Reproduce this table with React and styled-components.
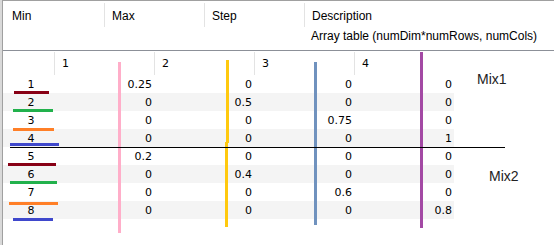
import React from "react";
import styled, { createGlobalStyle } from "styled-components";

const ROWS = [
  { label: "1", values: ["0.25", "0", "0", "0"], swatch: { color: "#880015", left: 11, width: 35, top: 16 } },
  { label: "2", values: ["0", "0.5", "0", "0"], swatch: { color: "#22b14c", left: 10, width: 40, top: 16 } },
  { label: "3", values: ["0", "0", "0.75", "0"], swatch: { color: "#ff7f27", left: 10, width: 41, top: 17 } },
  { label: "4", values: ["0", "0", "0", "1"], swatch: { color: "#3f48cc", left: 7, width: 49, top: 14 } },
  { label: "5", values: ["0.2", "0", "0", "0"], swatch: { color: "#880015", left: 5, width: 48, top: 16 } },
  { label: "6", values: ["0", "0.4", "0", "0"], swatch: { color: "#22b14c", left: 7, width: 47, top: 16 } },
  { label: "7", values: ["0", "0", "0.6", "0"], swatch: { color: "#ff7f27", left: 6, width: 49, top: 19 } },
  { label: "8", values: ["0", "0", "0", "0.8"], swatch: { color: "#3f48cc", left: 10, width: 40, top: 17 } },
];

// hand-drawn markers laid over the sheet
const MARKERS = [
  { color: "#ffaec9", x: 115, y: 11, h: 171 },
  { color: "#ffc90e", x: 223, y: 9, h: 83 },
  { color: "#ffc90e", x: 222, y: 91, h: 85 },
  { color: "#7092be", x: 311, y: 11, h: 163 },
  { color: "#a349a4", x: 417, y: 1, h: 176 },
];

const GlobalStyle = createGlobalStyle`
  html, body {
    margin: 0;
    padding: 0;
    background: #fff;
  }
  body {
    font-family: "Liberation Sans", Arial, sans-serif;
    font-size: 12px;
    color: #000;
  }
`;

function App() {
  return (
    <>
      <GlobalStyle />
      <Frame>
        <Panel>
          <Header>
            <HeadCell>
              <Title $first>Min</Title>
            </HeadCell>
            <HeadCell>
              <Title>Max</Title>
            </HeadCell>
            <HeadCell>
              <Title>Step</Title>
            </HeadCell>
            <HeadCell>
              <Title>Description</Title>
              <Note>Array table (numDim*numRows, numCols)</Note>
            </HeadCell>
          </Header>

          <Body>
            <Sheet>
              <SheetRow $head>
                <Corner />
                {["1", "2", "3", "4"].map((c) => (
                  <ColHead key={c}>{c}</ColHead>
                ))}
              </SheetRow>
              {ROWS.map((row, i) => (
                <SheetRow key={row.label} $striped={i % 2 === 1}>
                  <RowHead>
                    {row.label}
                    <Swatch
                      $color={row.swatch.color}
                      $left={row.swatch.left}
                      $width={row.swatch.width}
                      $top={row.swatch.top}
                    />
                  </RowHead>
                  {row.values.map((v, j) => (
                    <Cell key={j}>{v}</Cell>
                  ))}
                </SheetRow>
              ))}
            </Sheet>

            <Side>
              <Tag $indent={23} $gap={20}>Mix1</Tag>
              <Tag $indent={35} $gap={81}>Mix2</Tag>
            </Side>

            {MARKERS.map((m, i) => (
              <Marker key={i} $color={m.color} $x={m.x} $y={m.y} $h={m.h} />
            ))}
            <GroupLine />
          </Body>
        </Panel>
      </Frame>
    </>
  );
}

const Frame = styled.div`
  width: 554px;
  height: 245px;
  box-sizing: border-box;
  border-left: 2px solid #d9d9d9;
  overflow: hidden;
  background: #fff;
`;

const Panel = styled.div`
  height: 100%;
  box-sizing: border-box;
  border-left: 1px solid #a0a0a0;
  border-top: 1px solid #a0a0a0;
  display: flex;
  flex-direction: column;
`;

const Header = styled.div`
  display: grid;
  grid-template-columns: 101px 100px 100px 1fr;
  height: 49px;
  border-bottom: 1px solid #8c9098;
`;

const HeadCell = styled.div`
  display: flex;
  flex-direction: column;
  min-width: 0;
`;

const Title = styled.div`
  height: 24px;
  margin-top: 2px;
  line-height: 26px;
  padding-left: ${(p) => (p.$first ? "9px" : "7px")};
  border-left: ${(p) => (p.$first ? "none" : "1px solid #e3e3e3")};
  white-space: nowrap;
`;

const Note = styled.div`
  line-height: 19px;
  padding-left: 7px;
  white-space: nowrap;
`;

const Body = styled.div`
  position: relative;
  flex: 1;
  display: flex;
`;

const Sheet = styled.div`
  width: 451px;
  display: flex;
  flex-direction: column;
  font-family: "DejaVu Sans", Verdana, sans-serif;
  font-size: 11px;
`;

const SheetRow = styled.div`
  display: grid;
  grid-template-columns: 51px repeat(4, 100px);
  height: ${(p) => (p.$head ? "24px" : "18px")};
  background: ${(p) => (p.$striped ? "#f4f4f4" : "transparent")};
`;

const Corner = styled.div``;

const ColHead = styled.div`
  margin-top: 1px;
  height: 23px;
  line-height: 23px;
  padding-left: 7px;
  border-left: 1px solid #e3e3e3;
`;

const RowHead = styled.div`
  position: relative;
  box-sizing: border-box;
  height: 18px;
  padding: 2px 0 0 5px;
  line-height: 16px;
  text-align: center;
`;

const Swatch = styled.span`
  position: absolute;
  left: ${(p) => p.$left}px;
  top: ${(p) => p.$top}px;
  width: ${(p) => p.$width}px;
  height: 3px;
  background: ${(p) => p.$color};
`;

const Cell = styled.div`
  box-sizing: border-box;
  height: 18px;
  padding: 2px 2px 0 0;
  line-height: 16px;
  text-align: right;
`;

const Side = styled.div`
  flex: 1;
  display: flex;
  flex-direction: column;
`;

const Tag = styled.div`
  margin-top: ${(p) => p.$gap}px;
  padding-left: ${(p) => p.$indent}px;
  font-size: 14px;
  line-height: 16px;
  color: #222;
`;

const Marker = styled.span`
  position: absolute;
  left: ${(p) => p.$x}px;
  top: ${(p) => p.$y}px;
  width: 3px;
  height: ${(p) => p.$h}px;
  background: ${(p) => p.$color};
`;

const GroupLine = styled.span`
  position: absolute;
  left: 7px;
  top: 96px;
  width: 495px;
  height: 1px;
  background: #000;
`;

export default App;
